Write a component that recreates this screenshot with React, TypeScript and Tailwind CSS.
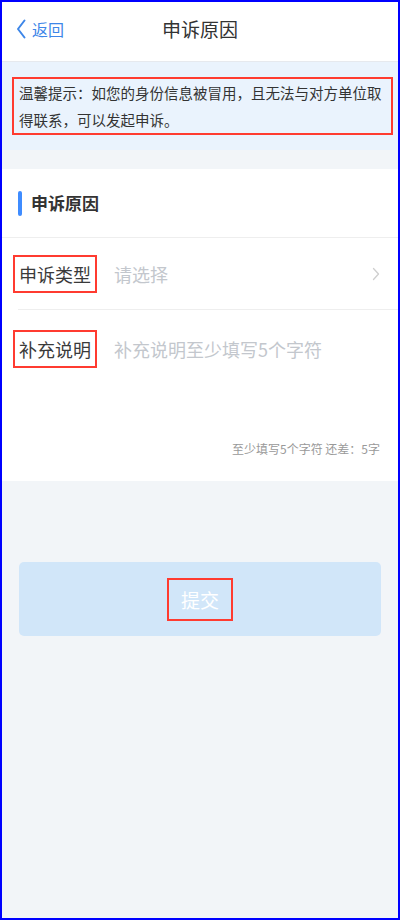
import React from "react";

export default function App() {
  return (
    <div className="w-[400px] h-[920px] border-2 border-[#0000ff] bg-[#f2f5f8] flex flex-col font-['Noto_Sans_CJK_SC',sans-serif] text-[#333]">
      {/* Header */}
      <div className="h-[60px] shrink-0 bg-white border-b border-[#e6e9ee] grid grid-cols-[1fr_auto_1fr] items-center pb-[6px]">
        <div className="flex items-center pl-[14px] text-[#3d86e8]">
          <svg width="10" height="20" viewBox="0 0 10 20" fill="none" className="mr-[6px]">
            <path d="M8.5 1.5 L2 10 L8.5 18.5" stroke="#3d86e8" strokeWidth="2" strokeLinecap="round" strokeLinejoin="round" />
          </svg>
          <span className="text-[16px] leading-[22px]">返回</span>
        </div>
        <div className="text-[19px] leading-[26px] text-[#333]">申诉原因</div>
        <div />
      </div>

      {/* Notice */}
      <div className="bg-[#eaf3fd] pt-[15px] pb-[15px] pl-[10px] pr-[5px]">
        <div className="border-2 border-[#ff3b30] pl-[5px] pr-[2px] text-[14.5px] leading-[27px] text-[#333]">
          温馨提示：如您的身份信息被冒用，且无法与对方单位取得联系，可以发起申诉。
        </div>
      </div>

      {/* Card */}
      <div className="mt-[19px] bg-white">
        <div className="h-[69px] flex items-center pl-[16px] border-b border-[#eeeeee]">
          <div className="w-[4px] h-[25px] rounded-full bg-[#3f8cff]" />
          <div className="ml-[9px] text-[17px] font-bold leading-[24px] text-[#333]">申诉原因</div>
        </div>

        <div className="ml-[16px] h-[72px] flex items-center border-b border-[#eeeeee]">
          <div className="-ml-[5px] border-2 border-[#ff3b30] px-[4px] py-[5px] text-[18px] leading-[24px] text-[#3a3a3a]">
            申诉类型
          </div>
          <div className="ml-[17px] flex-1 text-[18px] leading-[24px] text-[#c3c7cd]">请选择</div>
          <svg width="8" height="14" viewBox="0 0 8 14" fill="none" className="mr-[18px]">
            <path d="M1.5 1.5 L6.5 7 L1.5 12.5" stroke="#cfcfcf" strokeWidth="1.3" strokeLinecap="round" strokeLinejoin="round" />
          </svg>
        </div>

        <div className="pl-[11px] pt-[20px] flex items-start">
          <div className="border-2 border-[#ff3b30] px-[4px] py-[5px] text-[18px] leading-[24px] text-[#3a3a3a]">
            补充说明
          </div>
          <div className="ml-[17px] pt-[7px] text-[18px] leading-[24px] text-[#c3c7cd]">补充说明至少填写5个字符</div>
        </div>

        <div className="mt-[72px] pb-[23px] pr-[18px] text-right text-[12px] leading-[18px] text-[#999]">
          至少填写5个字符 还差：5字
        </div>
      </div>

      {/* Submit */}
      <div className="mt-[81px] mx-[17px] h-[74px] rounded-[5px] bg-[#d1e6f9] flex items-center justify-center">
        <div className="border-2 border-[#ff3b30] px-[12px] py-[6px] text-[19px] leading-[27px] text-white">
          提交
        </div>
      </div>
    </div>
  );
}
